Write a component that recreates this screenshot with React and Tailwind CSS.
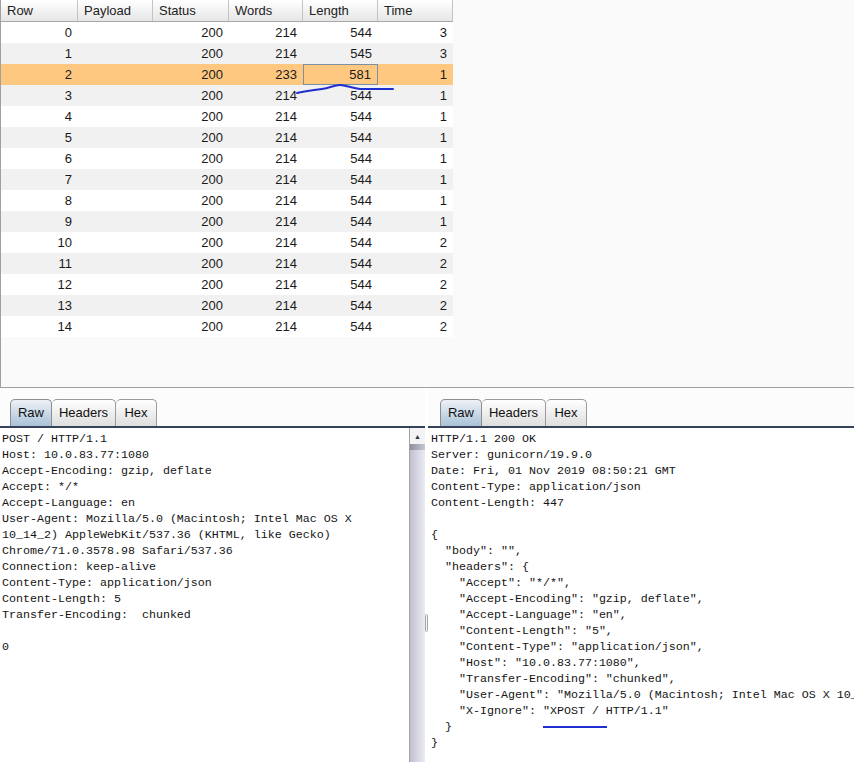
const columns = [
  { label: 'Row', width: 'w-[77px]' },
  { label: 'Payload', width: 'w-[75px]' },
  { label: 'Status', width: 'w-[76px]' },
  { label: 'Words', width: 'w-[74px]' },
  { label: 'Length', width: 'w-[75px]' },
  { label: 'Time', width: 'w-[75px]' },
];

const rows = [
  [0, 200, 214, 544, 3],
  [1, 200, 214, 545, 3],
  [2, 200, 233, 581, 1],
  [3, 200, 214, 544, 1],
  [4, 200, 214, 544, 1],
  [5, 200, 214, 544, 1],
  [6, 200, 214, 544, 1],
  [7, 200, 214, 544, 1],
  [8, 200, 214, 544, 1],
  [9, 200, 214, 544, 1],
  [10, 200, 214, 544, 2],
  [11, 200, 214, 544, 2],
  [12, 200, 214, 544, 2],
  [13, 200, 214, 544, 2],
  [14, 200, 214, 544, 2],
];

const requestLines = [
  'POST / HTTP/1.1',
  'Host: 10.0.83.77:1080',
  'Accept-Encoding: gzip, deflate',
  'Accept: */*',
  'Accept-Language: en',
  'User-Agent: Mozilla/5.0 (Macintosh; Intel Mac OS X',
  '10_14_2) AppleWebKit/537.36 (KHTML, like Gecko)',
  'Chrome/71.0.3578.98 Safari/537.36',
  'Connection: keep-alive',
  'Content-Type: application/json',
  'Content-Length: 5',
  'Transfer-Encoding:  chunked',
  '',
  '0',
];

// response pane is scrolled/clipped at the right edge, like in the tool
const responseLines = [
  'HTTP/1.1 200 OK',
  'Server: gunicorn/19.9.0',
  'Date: Fri, 01 Nov 2019 08:50:21 GMT',
  'Content-Type: application/json',
  'Content-Length: 447',
  '',
  '{',
  '  "body": "",',
  '  "headers": {',
  '    "Accept": "*/*",',
  '    "Accept-Encoding": "gzip, deflate",',
  '    "Accept-Language": "en",',
  '    "Content-Length": "5",',
  '    "Content-Type": "application/json",',
  '    "Host": "10.0.83.77:1080",',
  '    "Transfer-Encoding": "chunked",',
  '    "User-Agent": "Mozilla/5.0 (Macintosh; Intel Mac OS X 10_',
  '    "X-Ignore": "XPOST / HTTP/1.1"',
  '  }',
  '}',
];

export default function App() {
  return (
    <div className="relative h-[762px] w-[854px] overflow-hidden bg-white font-['Liberation_Sans',Arial,sans-serif]">
      <ResultsTable />

      <div className="flex h-[374px]">
        <div className="flex w-[425px] flex-col">
          <Tabs offset="pl-[10px]" />
          <div className="flex min-h-0 flex-1">
            <TextArea lines={requestLines} padding="pl-[2px]" />
            <Scrollbar />
          </div>
        </div>

        <div className="relative w-[3px] bg-white">
          <div className="absolute left-0 top-[226px] h-[18px] w-[3px] rounded-sm border border-[#a8a8a8] bg-[#f4f4f4]" />
        </div>

        <div className="flex min-w-0 flex-1 flex-col">
          <Tabs offset="pl-[12px]" />
          <TextArea lines={responseLines} padding="pl-[3px]" />
        </div>
      </div>

      <Annotations />
    </div>
  );
}

function ResultsTable() {
  return (
    <div className="h-[388px] border-b border-l border-[#a0a0a0] bg-[#fafafa]">
      <div className="w-[452px]">
        <div className="flex h-[22px] border-b border-[#a8a8a8] bg-gradient-to-b from-[#ffffff] to-[#e6e6e6]">
          {columns.map((col) => (
            <div
              key={col.label}
              className={`${col.width} flex items-center border-r border-[#c4c4c4] pl-[6px] text-[13px] text-[#222]`}
            >
              {col.label}
            </div>
          ))}
        </div>

        {rows.map((row, i) => (
          <TableRow key={row[0]} row={row} index={i} />
        ))}
      </div>
    </div>
  );
}

function TableRow({ row, index }) {
  const selected = index === 2;
  const bg = selected
    ? 'bg-[#ffc881]'
    : index % 2 === 1
      ? 'bg-[#f1f1f1]'
      : 'bg-white';

  const [num, status, words, length, time] = row;
  const cells = [num, '', status, words, length, time];

  return (
    <div className={`flex h-[21px] ${bg}`}>
      {cells.map((value, c) => (
        <div
          key={c}
          className={`${columns[c].width} flex items-center justify-end pr-[6px] text-[13px] text-[#1a1a1a] ${
            selected && c === 4 ? 'border border-[#7d8fa3]' : ''
          }`}
        >
          {value}
        </div>
      ))}
    </div>
  );
}

function Tabs({ offset }) {
  return (
    <div className={`flex h-[40px] items-end border-b-2 border-[#35425a] bg-[#fcfcfc] ${offset}`}>
      <Tab label="Raw" width="w-[42px]" active />
      <Tab label="Headers" width="w-[64px]" />
      <Tab label="Hex" width="w-[41px]" />
    </div>
  );
}

function Tab({ label, width, active = false }) {
  return (
    <div
      className={
        active
          ? `${width} flex h-[27px] items-center justify-center rounded-t-[5px] border border-b-0 border-[#8c8c8c] bg-gradient-to-b from-[#eef2f6] to-[#a9c2d8] text-[13px] text-[#111]`
          : `${width} flex h-[27px] items-center justify-center rounded-t-[5px] border border-b-0 border-l-0 border-[#9a9a9a] bg-gradient-to-b from-[#ffffff] to-[#dedede] text-[13px] text-[#111]`
      }
    >
      {label}
    </div>
  );
}

function TextArea({ lines, padding }) {
  return (
    <div
      className={`min-w-0 flex-1 overflow-hidden whitespace-pre bg-white pt-[3px] ${padding} font-['Liberation_Mono','Courier_New',monospace] text-[11.67px] leading-[16px] text-[#141414]`}
    >
      {lines.map((line, i) => (
        <div key={i} className="h-[16px]">
          {line}
        </div>
      ))}
    </div>
  );
}

function Scrollbar() {
  return (
    <div className="flex w-[16px] flex-col border-l border-[#a4a4a4] bg-gradient-to-r from-[#c0c0d0] via-[#d6d6e4] to-[#ebebf2]">
      <div className="flex h-[16px] items-center justify-center bg-[#f4f4f6] text-[7px] leading-none text-[#333]">
        ▲
      </div>
      <div className="h-[6px] bg-gradient-to-r from-[#8e8e9e] to-[#c8c8d4]" />
    </div>
  );
}

function Annotations() {
  return (
    <svg
      className="pointer-events-none absolute left-0 top-0"
      width="854"
      height="762"
      viewBox="0 0 854 762"
    >
      <path
        d="M297 93 C305 91 313 90 322 89 C330 88 334 85 340 85 C346 85 350 88 360 89 C372 89 383 89 393 89"
        fill="none"
        stroke="#1f2fcf"
        strokeWidth="2"
        strokeLinecap="round"
      />
      <path
        d="M543 727 L607 727"
        fill="none"
        stroke="#1f2fcf"
        strokeWidth="2"
      />
    </svg>
  );
}
